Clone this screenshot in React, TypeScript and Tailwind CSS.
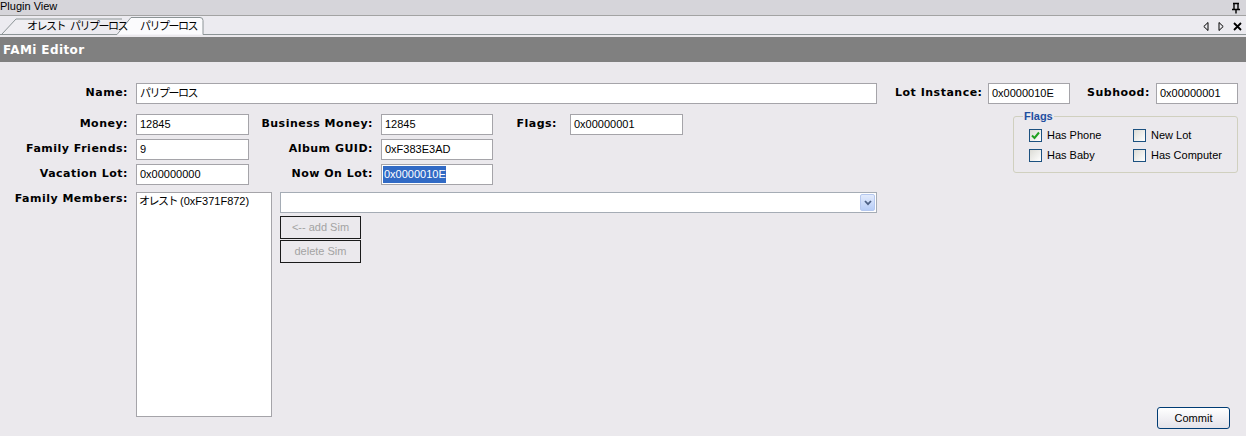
import React from 'react';

const jp = "font-['Liberation_Sans','Noto_Sans_CJK_JP',sans-serif]";

const Label: React.FC<{ w: string; children: React.ReactNode }> = ({ w, children }) => (
  <div className={`${w} shrink-0 text-right font-['DejaVu_Sans',sans-serif] font-bold text-[11px] tracking-[0.5px] text-black whitespace-nowrap`}>
    {children}
  </div>
);

const TextBox: React.FC<{ w: string; value?: React.ReactNode }> = ({ w, value }) => (
  <div
    className={`${w} h-[21px] shrink-0 bg-white border border-[#a5a4a9] pl-[3px] flex items-center text-[11px] text-black ${jp} overflow-hidden whitespace-nowrap`}
  >
    {value}
  </div>
);

const CheckBox: React.FC<{ checked?: boolean; label: string }> = ({ checked, label }) => (
  <div className="flex items-center gap-[5px] h-[14px] whitespace-nowrap">
    <div className="w-[13px] h-[13px] shrink-0 border border-[#1c5180] bg-gradient-to-br from-[#dcdcd6] to-white flex items-center justify-center">
      {checked && (
        <svg width="9" height="9" viewBox="0 0 9 9">
          <path d="M1 4.5 L3.5 7 L8 1.5" fill="none" stroke="#21a121" strokeWidth="2" />
        </svg>
      )}
    </div>
    <span className="text-[11px] text-black">{label}</span>
  </div>
);

const GrayButton: React.FC<{ children: React.ReactNode }> = ({ children }) => (
  <div className="w-[81px] h-[23px] border border-[#1a1a1a] flex items-center justify-center text-[11px] text-[#a3a3a3]">
    {children}
  </div>
);

export default function App() {
  return (
    <div className="w-[1246px] h-[436px] bg-[#ebe9ed] flex flex-col overflow-hidden font-['Liberation_Sans',sans-serif] text-[11px]">
      {/* title bar */}
      <div className="h-[16px] shrink-0 bg-[#d6d5da] border-b border-[#a3a3a3] flex items-center justify-between">
        <span className="text-[11px] leading-none text-black -mt-[2px]">Plugin View</span>
        <svg width="12" height="12" viewBox="0 0 12 12" className="mr-[4px]">
          <path d="M3 1.5 H9 M4 1.5 V7 M8 1.5 V7 M2 7.5 H10 M6 7.5 V11.5" stroke="#000" strokeWidth="1.4" fill="none" />
        </svg>
      </div>

      {/* document tabs */}
      <div className="h-[19px] shrink-0 bg-[#ecebf0] relative flex items-end">
        <svg width="1246" height="19" className="absolute left-0 top-0">
          <path d="M2 18 L16 3 H122" fill="#efeef2" stroke="#8c9496" />
          <path d="M117 18.5 L131 1.5 H200 Q203 1.5 203 4.5 V18.5 Z" fill="#fbfbfd" />
          <path d="M117 18.5 L131 1.5 H200 Q203 1.5 203 4.5 V18.5" fill="none" stroke="#8c9496" />
          <path d="M0 18.5 H117 M203 18.5 H1246" stroke="#8c9496" />
        </svg>
        <div className={`relative flex items-center h-[17px] ${jp} text-[11px] tracking-[-1.5px] text-black`}>
          <span className="ml-[27px]">オレスト</span>
          <span className="ml-[5px]">パリプーロス</span>
          <span className="ml-[13px]">パリプーロス</span>
        </div>
        <div className="relative ml-auto mr-[4px] mb-[4px] flex items-center gap-[9px]">
          <svg width="6" height="9" viewBox="0 0 6 9">
            <path d="M5 0.5 V8.5 L0.8 4.5 Z" fill="none" stroke="#000" />
          </svg>
          <svg width="6" height="9" viewBox="0 0 6 9">
            <path d="M1 0.5 V8.5 L5.2 4.5 Z" fill="none" stroke="#000" />
          </svg>
          <svg width="9" height="9" viewBox="0 0 9 9">
            <path d="M1 1 L8 8 M8 1 L1 8" stroke="#000" strokeWidth="1.8" />
          </svg>
        </div>
      </div>

      <div className="h-[2px] shrink-0" />

      {/* editor caption */}
      <div className="h-[25px] shrink-0 bg-[#808080] flex items-center pl-[3px]">
        <span className="font-['DejaVu_Sans',sans-serif] font-bold text-[12px] tracking-[0.4px] text-white">FAMi Editor</span>
      </div>

      {/* editor body */}
      <div className="flex-1 flex pt-[21px]">
        {/* left side */}
        <div className="w-[877px] shrink-0 flex flex-col">
          <div className="flex items-center">
            <Label w="w-[128px]">Name:</Label>
            <div className="ml-[8px]">
              <TextBox w="w-[741px]" value={<span className="tracking-[-1.5px]">パリプーロス</span>} />
            </div>
          </div>

          <div className="flex flex-col gap-[4px] mt-[10px]">
            <div className="flex items-center">
              <Label w="w-[128px]">Money:</Label>
              <div className="ml-[8px]"><TextBox w="w-[113px]" value="12845" /></div>
              <Label w="w-[124px]">Business Money:</Label>
              <div className="ml-[8px]"><TextBox w="w-[112px]" value="12845" /></div>
              <Label w="w-[64px]">Flags:</Label>
              <div className="ml-[13px]"><TextBox w="w-[113px]" value="0x00000001" /></div>
            </div>
            <div className="flex items-center">
              <Label w="w-[128px]">Family Friends:</Label>
              <div className="ml-[8px]"><TextBox w="w-[113px]" value="9" /></div>
              <Label w="w-[124px]">Album GUID:</Label>
              <div className="ml-[8px]"><TextBox w="w-[112px]" value="0xF383E3AD" /></div>
            </div>
            <div className="flex items-center">
              <Label w="w-[128px]">Vacation Lot:</Label>
              <div className="ml-[8px]"><TextBox w="w-[113px]" value="0x00000000" /></div>
              <Label w="w-[124px]">Now On Lot:</Label>
              <div className="ml-[8px]">
                <TextBox
                  w="w-[112px]"
                  value={<span className="bg-[#316ac5] text-white -ml-[2px] pl-[1px]">0x0000010E</span>}
                />
              </div>
            </div>
          </div>

          <div className="flex items-start mt-[7px]">
            <div className="-mt-[1px]">
              <Label w="w-[128px]">Family Members:</Label>
            </div>
            <div className={`ml-[8px] w-[136px] h-[225px] bg-white border border-[#a5a4a9] pl-[2px] ${jp} text-[11px] text-black`}>
              <span className="tracking-[-1.5px]">オレスト</span> (0xF371F872)
            </div>
            <div className="ml-[8px] flex flex-col">
              <div className="w-[597px] h-[21px] bg-white border border-[#a5acb5] flex justify-end items-center pr-px">
                <div className="w-[15px] h-[17px] rounded-[2px] border border-[#b5c8ef] bg-gradient-to-b from-[#e3ebfc] to-[#b7cdf7] flex items-center justify-center">
                  <svg width="8" height="6" viewBox="0 0 8 6">
                    <path d="M1 1 L4 4.2 L7 1" fill="none" stroke="#4d6185" strokeWidth="1.8" />
                  </svg>
                </div>
              </div>
              <div className="mt-[3px]"><GrayButton>&lt;-- add Sim</GrayButton></div>
              <div className="mt-[1px]"><GrayButton>delete Sim</GrayButton></div>
            </div>
          </div>
        </div>

        {/* right side */}
        <div className="flex-1 flex flex-col pl-[18px]">
          <div className="flex items-center">
            <Label w="w-[86px]">Lot Instance:</Label>
            <div className="ml-[7px]"><TextBox w="w-[82px]" value="0x0000010E" /></div>
            <div className="ml-[17px]"><Label w="w-[60px]">Subhood:</Label></div>
            <div className="ml-[9px]"><TextBox w="w-[82px]" value="0x00000001" /></div>
          </div>

          <fieldset className="ml-[118px] mt-[6px] w-[224px] h-[63px] border border-[#d0d0bf] rounded-[3px] px-[15px] pt-0 pb-0">
            <legend className="px-[1px] -ml-[6px] text-[11px] font-bold text-[#1f4fa0] leading-[13px]">Flags</legend>
            <div className="grid grid-cols-[104px_1fr] gap-y-[6px] mt-[5px]">
              <CheckBox checked label="Has Phone" />
              <CheckBox label="New Lot" />
              <CheckBox label="Has Baby" />
              <CheckBox label="Has Computer" />
            </div>
          </fieldset>

          <div className="flex-1" />
          <div className="self-end mr-[16px] mb-[7px] w-[73px] h-[22px] rounded-[3px] border border-[#003c74] bg-gradient-to-b from-white to-[#e3e2e9] flex items-center justify-center text-[11px] text-black">
            Commit
          </div>
        </div>
      </div>
    </div>
  );
}
